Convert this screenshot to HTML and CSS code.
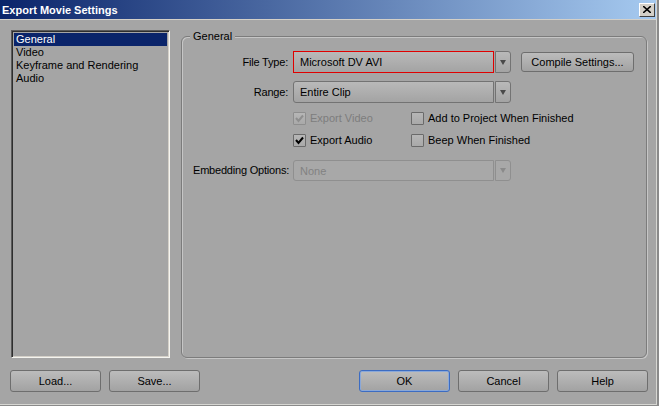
FILE: index.html
```html
<!DOCTYPE html>
<html lang="en">
<head>
    <meta charset="UTF-8">
    <title>Export Movie Settings</title>
    <link rel="stylesheet" href="styles.css">
</head>
<body>
    <div class="window">
        <!-- Barra de título -->
        <div class="titlebar">
            <span class="title">Export Movie Settings</span>
            <button class="close-btn">
                <svg width="8" height="7" viewBox="0 0 8 7"><path d="M0 0 L8 7 M8 0 L0 7" stroke="#000" stroke-width="1.6"/></svg>
            </button>
        </div>

        <div class="dialog-body">
            <div class="main">
                <!-- Lista de categorías -->
                <div class="listbox">
                    <div class="list-item selected">General</div>
                    <div class="list-item">Video</div>
                    <div class="list-item">Keyframe and Rendering</div>
                    <div class="list-item">Audio</div>
                </div>

                <!-- Grupo General -->
                <fieldset class="group">
                    <legend class="group-title">General</legend>

                    <div class="row">
                        <span class="row-label">File Type:</span>
                        <div class="combo">
                            <div class="combo-field focus">Microsoft DV AVI</div>
                            <div class="combo-btn"><span class="arrow"></span></div>
                        </div>
                        <button class="btn compile-btn">Compile Settings...</button>
                    </div>

                    <div class="row range-row">
                        <span class="row-label">Range:</span>
                        <div class="combo">
                            <div class="combo-field">Entire Clip</div>
                            <div class="combo-btn"><span class="arrow"></span></div>
                        </div>
                    </div>

                    <div class="checks">
                        <label class="check disabled">
                            <span class="box"><svg width="11" height="11" viewBox="0 0 11 11"><path d="M2 5 L4.5 8 L9 2.5" fill="none" stroke="#8e8e8e" stroke-width="2"/></svg></span>
                            Export Video
                        </label>
                        <label class="check">
                            <span class="box"></span>
                            Add to Project When Finished
                        </label>
                        <label class="check">
                            <span class="box"><svg width="11" height="11" viewBox="0 0 11 11"><path d="M2 5 L4.5 8 L9 2.5" fill="none" stroke="#000" stroke-width="2"/></svg></span>
                            Export Audio
                        </label>
                        <label class="check">
                            <span class="box"></span>
                            Beep When Finished
                        </label>
                    </div>

                    <div class="row embed-row">
                        <span class="row-label">Embedding Options:</span>
                        <div class="combo disabled">
                            <div class="combo-field">None</div>
                            <div class="combo-btn"><span class="arrow"></span></div>
                        </div>
                    </div>
                </fieldset>
            </div>

            <!-- Botones inferiores -->
            <div class="footer">
                <div class="footer-left">
                    <button class="btn">Load...</button>
                    <button class="btn">Save...</button>
                </div>
                <div class="footer-right">
                    <button class="btn default">OK</button>
                    <button class="btn">Cancel</button>
                    <button class="btn">Help</button>
                </div>
            </div>
        </div>
    </div>
</body>
</html>
```

FILE: styles.css
```css
body {
    margin: 0;
    background: #8a8a8a;
    font-family: "Liberation Sans", Arial, sans-serif;
    font-size: 11px;
    color: #000;
}

.window {
    width: 657px;
    height: 405px;
    box-sizing: border-box;
    background: #a5a5a5;
    border-right: 1px solid #d6d6d2;
    border-bottom: 1px solid #d6d6d2;
    display: flex;
    flex-direction: column;
}

.titlebar {
    height: 19px;
    border-bottom: 1px solid #d4d0c8;
    background: linear-gradient(to right, #0a246a, #a6caf0);
    display: flex;
    align-items: center;
    justify-content: space-between;
    padding: 0 1px 0 2px;
}

.title {
    color: #fff;
    font-weight: bold;
    font-size: 11px;
}

.close-btn {
    width: 16px;
    height: 14px;
    padding: 0;
    background: #d4d0c8;
    border: 1px solid;
    border-color: #fff #404040 #404040 #fff;
    display: flex;
    align-items: center;
    justify-content: center;
}

.dialog-body {
    padding: 10px 8px 0 11px;
}

.main {
    display: flex;
    gap: 11px;
    height: 328px;
}

.listbox {
    width: 159px;
    box-sizing: border-box;
    border: 1px solid;
    border-color: #5a5a5a #f4f4f0 #f4f4f0 #5a5a5a;
    box-shadow: inset 1px 1px 0 #2e2e2e, inset -1px -1px 0 #d4d0c8;
    padding: 2px;
}

.list-item {
    height: 13px;
    line-height: 13px;
    padding-left: 2px;
    white-space: nowrap;
}

.list-item.selected {
    background: #0a246a;
    color: #fff;
}

.group {
    width: 466px;
    box-sizing: border-box;
    margin: 0;
    padding: 8px 10px 0 11px;
    border: 1px solid #7c7c7c;
    border-radius: 6px;
    box-shadow: inset 1px 1px 0 #c6c6c6, 1px 1px 0 #c6c6c6;
    height: 328px;
}

.group-title {
    padding: 0 3px;
    margin-left: -3px;
    background: #a5a5a5;
    line-height: 13px;
}

.row {
    display: flex;
    align-items: center;
    height: 22px;
}

.row-label {
    width: 95px;
    margin-right: 5px;
    text-align: right;
    white-space: nowrap;
    letter-spacing: -0.2px;
}

.range-row {
    margin-top: 8px;
}

.combo {
    display: flex;
    gap: 1px;
    height: 22px;
}

.combo-field {
    width: 201px;
    box-sizing: border-box;
    border: 1px solid #737373;
    border-radius: 3px 0 0 3px;
    background: linear-gradient(#b9b9b9, #a3a3a3);
    padding-left: 6px;
    line-height: 20px;
}

.combo-field.focus {
    border-color: #e00000;
    border-radius: 0;
}

.combo-btn {
    width: 16px;
    box-sizing: border-box;
    border: 1px solid #737373;
    border-radius: 0 3px 3px 0;
    background: linear-gradient(#b9b9b9, #a3a3a3);
    display: flex;
    align-items: center;
    justify-content: center;
}

.arrow {
    width: 0;
    height: 0;
    border-left: 3px solid transparent;
    border-right: 3px solid transparent;
    border-top: 5px solid #4a4a4a;
}

.combo.disabled .combo-field,
.combo.disabled .combo-btn {
    border-color: #8f8f8f;
    background: #a8a8a8;
    color: #828282;
}

.combo.disabled .arrow {
    border-top-color: #8a8a8a;
}

.btn {
    height: 22px;
    width: 91px;
    box-sizing: border-box;
    font-family: inherit;
    font-size: 11px;
    color: #000;
    border: 1px solid #6e6e6e;
    border-radius: 3px;
    background: linear-gradient(#bcbcbc, #a2a2a2);
    padding: 0;
}

.compile-btn {
    width: 113px;
    height: 20px;
    margin-left: 10px;
}

.btn.default {
    border-color: #3c6cc2;
    box-shadow: inset 0 0 0 1px #8aa8d8;
}

.checks {
    display: grid;
    grid-template-columns: 118px auto;
    grid-auto-rows: 22px;
    margin: 4px 0 0 100px;
}

.check {
    display: flex;
    align-items: center;
    gap: 4px;
    white-space: nowrap;
}

.box {
    width: 13px;
    height: 13px;
    box-sizing: border-box;
    border: 1px solid #6a6a6a;
    border-radius: 1px;
    background: linear-gradient(#b6b6b6, #a9a9a9);
    display: flex;
    align-items: center;
    justify-content: center;
}

.check.disabled {
    color: #7d7d7d;
}

.check.disabled .box {
    border-color: #8e8e8e;
}

.embed-row {
    margin-top: 8px;
}

.embed-row .combo {
    height: 21px;
}

.footer {
    display: flex;
    justify-content: space-between;
    margin-top: 12px;
}

.footer-left,
.footer-right {
    display: flex;
    gap: 8px;
}

.footer-left {
    margin-left: -1px;
}
```
